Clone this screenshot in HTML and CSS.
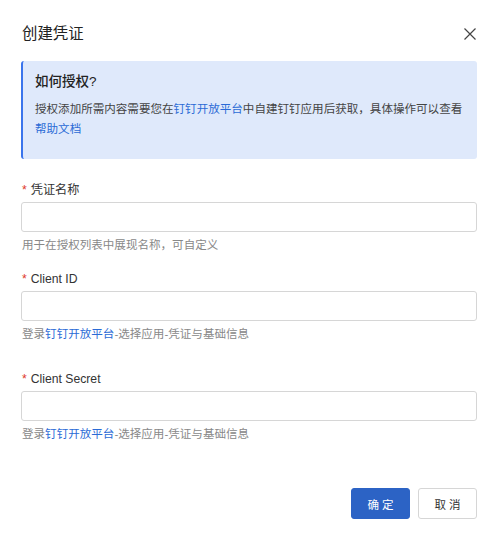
FILE: index.html
```html
<!DOCTYPE html>
<html lang="zh-CN">
<head>
<meta charset="utf-8">
<title>创建凭证</title>
<link rel="stylesheet" href="styles.css">
</head>
<body>
<div class="dialog">
  <div class="header">
    <div class="title">创建凭证</div>
    <svg class="close" width="12" height="12" viewBox="0 0 12 12"><path d="M0.5 0.5 L11.5 11.5 M11.5 0.5 L0.5 11.5" stroke="#444" stroke-width="1.2" fill="none"/></svg>
  </div>
  <div class="alert">
    <div class="alert-title">如何授权?</div>
    <div class="alert-body">授权添加所需内容需要您在<a class="link">钉钉开放平台</a>中自建钉钉应用后获取，具体操作可以查看<a class="link">帮助文档</a></div>
  </div>
  <div class="field field-1">
    <div class="label"><span class="req">*</span>凭证名称</div>
    <div class="input"></div>
    <div class="help">用于在授权列表中展现名称，可自定义</div>
  </div>
  <div class="field field-2">
    <div class="label"><span class="req">*</span>Client ID</div>
    <div class="input"></div>
    <div class="help">登录<a class="link">钉钉开放平台</a>-选择应用-凭证与基础信息</div>
  </div>
  <div class="field field-3">
    <div class="label"><span class="req">*</span>Client Secret</div>
    <div class="input"></div>
    <div class="help">登录<a class="link">钉钉开放平台</a>-选择应用-凭证与基础信息</div>
  </div>
  <div class="footer">
    <button class="btn btn-primary">确 定</button>
    <button class="btn">取 消</button>
  </div>
</div>
</body>
</html>
```

FILE: styles.css
```css
html, body {
  margin: 0;
  padding: 0;
  background: #ffffff;
}
body {
  font-family: "Liberation Sans", "Noto Sans CJK SC", sans-serif;
  color: #333333;
}
.dialog {
  width: 456px;
  padding: 0 23px 0 21px;
}
.header {
  display: flex;
  align-items: center;
  justify-content: space-between;
  padding-top: 23px;
  margin-bottom: 16px;
  height: 22px;
}
.title {
  font-size: 15.4px;
  line-height: 22px;
  color: #222222;
  padding-left: 1px;
}
.close {
  margin-right: 1px;
  display: block;
}
.alert {
  box-sizing: border-box;
  height: 98px;
  background: #dfe9fb;
  border-left: 2px solid #3a74ec;
  border-radius: 3px;
  padding: 11px 12px 0 12px;
}
.alert-title {
  font-size: 13.5px;
  line-height: 20px;
  font-weight: 500;
  color: #222222;
  margin-bottom: 7px;
}
.alert-body {
  font-size: 11.55px;
  line-height: 20px;
  color: #444444;
}
.link {
  color: #2b6bd6;
  text-decoration: none;
}
.field-1 {
  margin-top: 22px;
}
.field-2 {
  margin-top: 16px;
}
.field-3 {
  margin-top: 27px;
}
.label {
  font-size: 12.2px;
  line-height: 18px;
  color: #333333;
  margin-bottom: 3px;
  padding-left: 1px;
}
.req {
  color: #e0392b;
  margin-right: 4px;
}
.input {
  box-sizing: border-box;
  height: 30px;
  border: 1px solid #d6d6d6;
  border-radius: 3px;
  background: #ffffff;
}
.help {
  font-size: 11.55px;
  line-height: 18px;
  margin-top: 4px;
  color: #888888;
  padding-left: 1px;
}
.footer {
  display: flex;
  justify-content: flex-end;
  gap: 8px;
  margin-top: 45px;
}
.btn {
  box-sizing: border-box;
  width: 59px;
  height: 31px;
  border: 1px solid #d6d6d6;
  border-radius: 3px;
  background: #ffffff;
  color: #333333;
  font-family: "Liberation Sans", "Noto Sans CJK SC", sans-serif;
  font-size: 11.52px;
  padding: 0;
}
.btn-primary {
  background: #2c63c5;
  border-color: #2c63c5;
  color: #ffffff;
}
```
